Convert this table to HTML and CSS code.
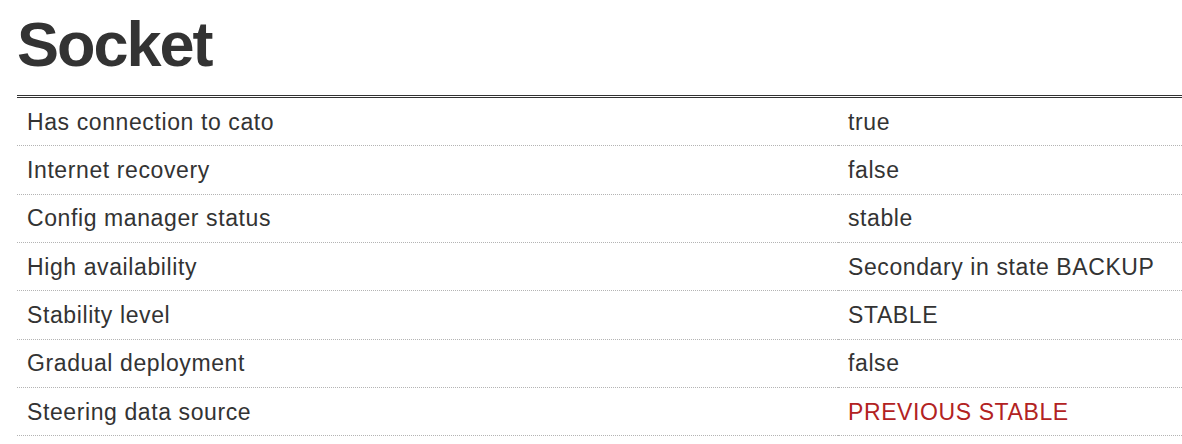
FILE: index.html
```html
<!DOCTYPE html>
<html lang="en">
<head>
<meta charset="utf-8">
<title>Socket</title>
<link rel="stylesheet" href="styles.css">
</head>
<body>
<main class="page">
  <h1 class="title">Socket</h1>
  <table class="info">
    <tbody>
      <tr><td class="key">Has connection to cato</td><td class="val">true</td></tr>
      <tr><td class="key">Internet recovery</td><td class="val">false</td></tr>
      <tr><td class="key">Config manager status</td><td class="val">stable</td></tr>
      <tr><td class="key">High availability</td><td class="val">Secondary in state BACKUP</td></tr>
      <tr><td class="key">Stability level</td><td class="val">STABLE</td></tr>
      <tr><td class="key">Gradual deployment</td><td class="val">false</td></tr>
      <tr><td class="key">Steering data source</td><td class="val val-warn">PREVIOUS STABLE</td></tr>
    </tbody>
  </table>
</main>
</body>
</html>
```
FILE: styles.css
```css
html, body {
  margin: 0;
  padding: 0;
  background: #fff;
}
body {
  font-family: "Liberation Sans", Arial, sans-serif;
  color: #333;
}
.page {
  padding: 8px 0 0 17px;
}
.title {
  margin: 0 0 15px 0;
  font-size: 63px;
  font-weight: bold;
  letter-spacing: -2px;
  line-height: 72px;
  color: #333;
}
.info {
  width: 100%;
  border-collapse: collapse;
  border-top: 3px double #333;
}
.info td {
  font-size: 23px;
  letter-spacing: 0.6px;
  line-height: 28px;
  padding: 9.67px 10px 9.67px 10px;
  border-bottom: 1px dotted #b4b4b4;
  text-align: left;
  vertical-align: middle;
}
.key {
  width: 801px;
}
.val-warn {
  color: #b22222;
  letter-spacing: -0.3px;
}
```
